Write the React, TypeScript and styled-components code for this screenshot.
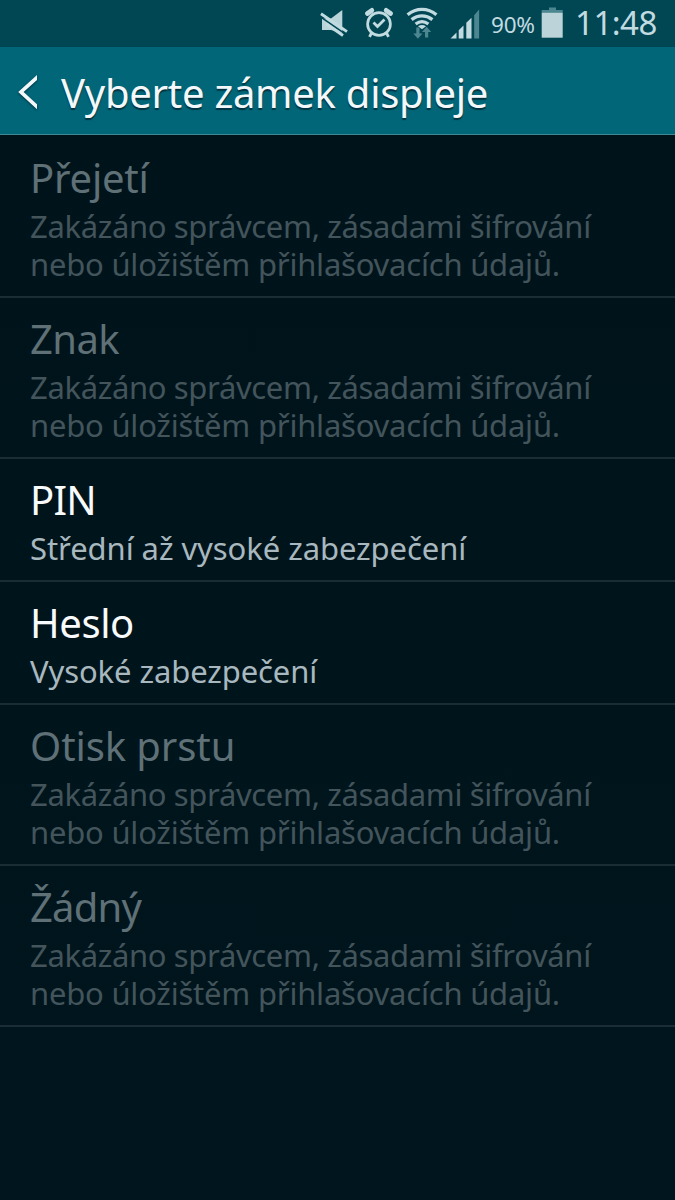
import React from 'react';
import styled, { createGlobalStyle } from 'styled-components';

const GlobalStyle = createGlobalStyle`
  * { box-sizing: border-box; }
  body { margin: 0; background: #00131b; }
`;

const Screen = styled.main`
  width: 675px;
  height: 1200px;
  overflow: hidden;
  background: linear-gradient(#00131a, #00151d);
  font-family: 'Noto Sans', sans-serif;
`;

const StatusBar = styled.div`
  display: flex;
  align-items: flex-start;
  height: 47px;
  padding-left: 318px;
  background: #014653;
  color: #c1dbe0;
`;

const StatusIcons = styled.svg`
  flex: none;
  width: 166px;
  height: 47px;
`;

const BatteryLevel = styled.span`
  width: 57px;
  padding-left: 7px;
  font-size: 22.5px;
  line-height: 49px;
  letter-spacing: -0.2px;
  white-space: nowrap;
`;

const BatteryIcon = styled.svg`
  flex: none;
  width: 24px;
  height: 47px;
`;

const Clock = styled.time`
  padding-left: 10px;
  font-size: 33px;
  line-height: 45px;
  letter-spacing: -0.5px;
  white-space: nowrap;
`;

const Header = styled.header`
  display: flex;
  align-items: center;
  height: 88px;
  background: #006678;
  border-bottom: 1px solid #3f8894;
`;

const BackIcon = styled.svg`
  flex: none;
  width: 61px;
  height: 60px;
  filter: drop-shadow(0 1px 1px rgba(0, 30, 40, 0.7));
`;

const Heading = styled.h1`
  margin: 5px 0 0;
  color: #f4f8fa;
  font-size: 40px;
  font-weight: 400;
  line-height: 56px;
  letter-spacing: -0.26px;
  white-space: nowrap;
  text-shadow: 0 2px 1px rgba(0, 25, 35, 0.65);
`;

const List = styled.ul`
  margin: 0;
  padding: 2px 0 0;
  list-style: none;
`;

const Row = styled.li`
  padding: 16px 0 13px 30px;
  border-bottom: 2px solid #1a2c34;
`;

const Title = styled.h2<{ $disabled?: boolean; $spacing: number }>`
  margin: 0;
  color: ${(p) => (p.$disabled ? '#5f7076' : '#f8fafb')};
  font-size: 40px;
  font-weight: 400;
  line-height: 50px;
  letter-spacing: ${(p) => p.$spacing}px;
`;

const Summary = styled.p<{ $disabled?: boolean }>`
  margin: 4px 0 0;
  color: ${(p) => (p.$disabled ? '#43545b' : '#a8b8be')};
  font-size: 31px;
  line-height: 38px;
`;

const SummaryLine = styled.span<{ $spacing: number }>`
  display: block;
  letter-spacing: ${(p) => p.$spacing}px;
  white-space: nowrap;
`;

const BLOCKED = [
  { text: 'Zakázáno správcem, zásadami šifrování', spacing: -0.35 },
  { text: 'nebo úložištěm přihlašovacích údajů.', spacing: -0.22 },
];

const options = [
  { title: 'Přejetí', lines: BLOCKED, disabled: true, spacing: -0.2 },
  { title: 'Znak', lines: BLOCKED, disabled: true, spacing: -0.6 },
  { title: 'PIN', lines: [{ text: 'Střední až vysoké zabezpečení', spacing: -0.07 }], disabled: false, spacing: -0.7 },
  { title: 'Heslo', lines: [{ text: 'Vysoké zabezpečení', spacing: -0.1 }], disabled: false, spacing: -0.4 },
  { title: 'Otisk prstu', lines: BLOCKED, disabled: true, spacing: -0.1 },
  { title: 'Žádný', lines: BLOCKED, disabled: true, spacing: -0.8 },
];

export default function App() {
  return (
    <>
      <GlobalStyle />
      <Screen>
        <StatusBar>
          <StatusIcons viewBox="318 0 166 47" fill="none">
            {/* muted speaker */}
            <path d="M322 18.5h9l11.3-8.5v23L331 30h-9z" fill="#b9d5da" />
            <path d="M320.5 16.8l26 18" stroke="#014653" strokeWidth="1.6" />
            <path d="M321 13.8l26 17.8M326 23.8l17 11.7" stroke="#c1dbe0" strokeWidth="2.9" />
            {/* alarm clock */}
            <circle cx="379" cy="24" r="11.4" stroke="#c1dbe0" strokeWidth="2.7" />
            <path d="M373.5 22.5l4 4 7-7" stroke="#c1dbe0" strokeWidth="2.8" />
            <path d="M367.4 13.4l4.4-3M390.6 13.4l-4.4-3" stroke="#c1dbe0" strokeWidth="4.8" strokeLinecap="round" />
            <path d="M371.5 33l-2 3.8M386.5 33l2 3.8" stroke="#c1dbe0" strokeWidth="2.8" />
            {/* wifi with transfer arrows */}
            <path d="M407.6 14.8c8.6-7.2 20.2-7.2 28.8 0M411.6 19.6c6.4-5 14.4-5 20.8 0M415.6 24c4-3 8.8-3 12.8 0" stroke="#c1dbe0" strokeWidth="3.3" />
            <path d="M418 26.2q4-2.4 8 0l-4 3z" fill="#c1dbe0" />
            <path d="M416.3 27.5h3.2v6h3l-4.6 5.2-4.6-5.2h3zM425 37.5h3.2v-5.5h3l-4.6-5.2-4.6 5.2h3z" fill="#4c8791" />
            {/* signal strength */}
            <path d="M450.5 38.4l6-5.8v5.8zM458.7 38.4v-8.2l4.8-4.6v12.8zM466.3 38.4V22.8l5.2-5v20.6z" fill="#c1dbe0" />
            <path d="M474.2 38.4V15.2l4.9-5.8v29z" fill="#4c8791" />
          </StatusIcons>
          <BatteryLevel>90%</BatteryLevel>
          <BatteryIcon viewBox="541 0 24 47">
            <path d="M549 7.6h7v2.5h6.7v3h-21v-3h7.3z" fill="#4c8791" />
            <path d="M541.7 12.8h21V37.7h-21z" fill="#bcd3d9" />
          </BatteryIcon>
          <Clock>11:48</Clock>
        </StatusBar>
        <Header>
          <BackIcon viewBox="0 60.5 61 60">
            <path d="M37 74.4v5L23.6 91.6 37 103.8v5L18.2 91.6z" fill="#f4f8fa" />
          </BackIcon>
          <Heading>Vyberte zámek displeje</Heading>
        </Header>
        <List>
          {options.map((option) => (
            <Row key={option.title}>
              <Title $disabled={option.disabled} $spacing={option.spacing}>{option.title}</Title>
              <Summary $disabled={option.disabled}>
                {option.lines.map((line) => (
                  <SummaryLine key={line.text} $spacing={line.spacing}>{line.text}</SummaryLine>
                ))}
              </Summary>
            </Row>
          ))}
        </List>
      </Screen>
    </>
  );
}
